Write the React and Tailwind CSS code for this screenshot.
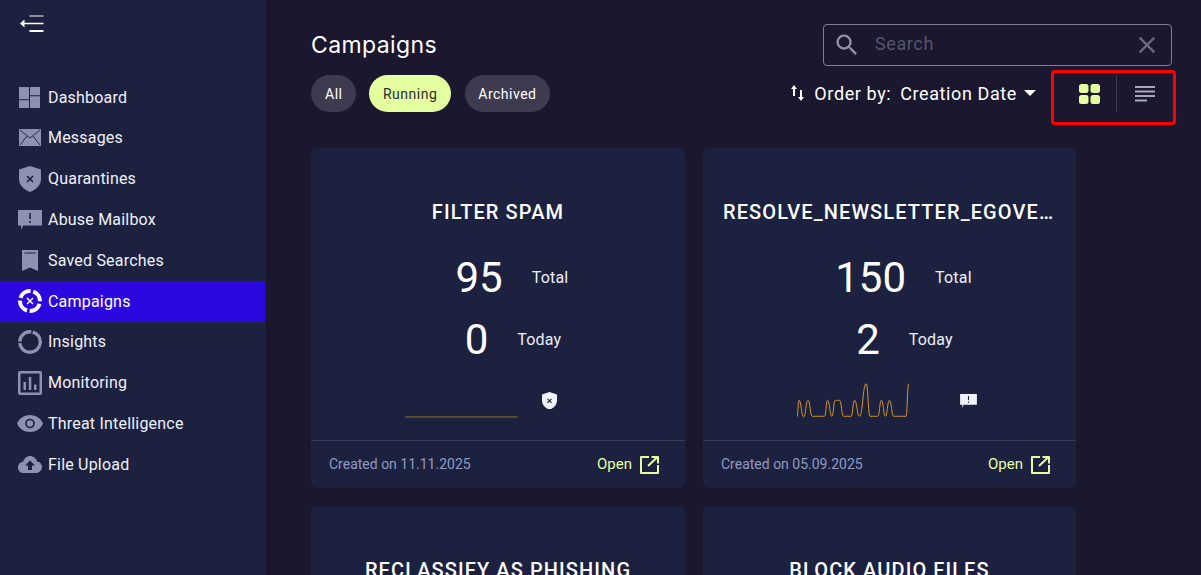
const iconClass = "fill-[#8e91b0]";

function DashboardIcon() {
  return (
    <svg width="21" height="21" viewBox="0 0 21 21" className={`${iconClass} -translate-x-px`}>
      <path d="M0 0h10v12.300H0zM0 13.300h10V21H0zM11 0h10v8.300H11zM11 9.300h10V21H11z" />
    </svg>
  );
}

function MailIcon() {
  return (
    <svg width="22" height="17" viewBox="0 0 22 17" className={iconClass}>
      <path d="M0 0h22v17H0z" />
      <path d="M1 1l10 8 10-8M1 16l7-9M21 16l-7-9" fill="none" stroke="#1d2140" strokeWidth="0.9" />
    </svg>
  );
}

function ShieldIcon({ size = 22, fill = "#8e91b0", mark = "#1d2140" }) {
  return (
    <svg width={size} height={size * 1.18} viewBox="0 0 22 26">
      <path d="M11 0l11 3.500V13c0 6-4.500 10.500-11 13C4.500 23.500 0 19 0 13V3.500z" fill={fill} />
      <path d="M8 10l6 6M14 10l-6 6" stroke={mark} strokeWidth="1.600" />
    </svg>
  );
}

function ChatIcon({ width = 24, height = 20, fill = "#8e91b0", mark = "#1d2140" }) {
  return (
    <svg width={width} height={height} viewBox="0 0 24 20">
      <path d="M0 0h24v15.500H5L3.500 20 3 15.500H0z" fill={fill} />
      <path d="M12 3v6M12 11v2" stroke={mark} strokeWidth="1.600" />
    </svg>
  );
}

function BookmarkIcon() {
  return (
    <svg width="16" height="21" viewBox="0 0 16 21" className={iconClass}>
      <path d="M0 0h16v21l-8-3.500L0 21z" />
      <path d="M2.500 3h11" stroke="#1d2140" strokeWidth="1" />
    </svg>
  );
}

function CampaignIcon() {
  return (
    <svg width="24" height="24" viewBox="0 0 24 24" fill="none" stroke="#fff">
      <circle cx="12" cy="12" r="10" strokeWidth="4" strokeDasharray="13 2.700" strokeDashoffset="-3" />
      <path d="M9 9l6 6M15 9l-6 6" strokeWidth="1.500" />
    </svg>
  );
}

function RingIcon() {
  return (
    <svg width="24" height="24" viewBox="0 0 24 24" fill="none" stroke="#8e91b0">
      <circle cx="12" cy="12" r="10.300" strokeWidth="3.400" strokeDasharray="30 1.500 17 1.500 14.700 0" strokeDashoffset="-1" />
    </svg>
  );
}

function MonitorIcon() {
  return (
    <svg width="24" height="24" viewBox="0 0 24 24" className={iconClass}>
      <path d="M2 0h20a2 2 0 012 2v20a2 2 0 01-2 2H2a2 2 0 01-2-2V2a2 2 0 012-2zm.5 2.500v19h19v-19z" fillRule="evenodd" />
      <path d="M5.500 11h2.500v8H5.500zM10.800 6h2.500v13h-2.500zM16 13.500h2.500V19H16z" />
    </svg>
  );
}

function EyeIcon() {
  return (
    <svg width="26" height="17" viewBox="0 0 26 17">
      <path d="M13 0c6 0 10.800 3.500 13 8.500C23.800 13.500 19 17 13 17S2.200 13.500 0 8.500C2.200 3.500 7 0 13 0z" fill="#8e91b0" />
      <circle cx="13" cy="8.500" r="4" fill="none" stroke="#1d2140" strokeWidth="1.700" />
    </svg>
  );
}

function CloudIcon() {
  return (
    <svg width="24" height="17" viewBox="0 0 24 17">
      <path d="M12 0c3.500 0 6.300 2.400 7 5.600 2.800.3 5 2.500 5 5.400 0 3.300-2.700 6-6 6H5.500C2.500 17 0 14.500 0 11.400c0-2.900 2.200-5.300 5-5.600C6.200 2.400 8.800 0 12 0z" fill="#8e91b0" />
      <path d="M12 4.500L17 9.500H14V14H10V9.500H7z" fill="#1d2140" />
    </svg>
  );
}

const navItems = [
  { label: "Dashboard", icon: <DashboardIcon /> },
  { label: "Messages", icon: <MailIcon /> },
  { label: "Quarantines", icon: <ShieldIcon /> },
  { label: "Abuse Mailbox", icon: <ChatIcon /> },
  { label: "Saved Searches", icon: <BookmarkIcon /> },
  { label: "Campaigns", icon: <CampaignIcon />, active: true },
  { label: "Insights", icon: <RingIcon /> },
  { label: "Monitoring", icon: <MonitorIcon /> },
  { label: "Threat Intelligence", icon: <EyeIcon /> },
  { label: "File Upload", icon: <CloudIcon /> },
];

const peaks = [
  [292, 170], [298, 120], [312, 170], [325, 120], [338, 168], [375, 168], [384, 120], [397, 168],
  [407, 120], [420, 120], [432, 168], [455, 168], [465, 120], [480, 168], [500, 70], [512, 168],
  [535, 168], [546, 120], [558, 168], [570, 120], [583, 168], [620, 168], [628, 70],
];

function smoothPath(points) {
  let d = `M${points[0][0]} ${points[0][1]}`;
  for (let i = 1; i < points.length; i++) {
    const [x0, y0] = points[i - 1];
    const [x1, y1] = points[i];
    const mid = (x1 - x0) / 2;
    d += `C${x0 + mid} ${y0} ${x1 - mid} ${y1} ${x1} ${y1}`;
  }
  return d;
}

function Sparkline({ flat }) {
  const line = flat ? "M285 170H624" : smoothPath(peaks);
  return (
    <svg width="113" height="36" viewBox={flat ? "285 65 340 108" : "292 65 340 108"} fill="none" className="shrink-0">
      {!flat && <path d={`${line}V170H292Z`} fill="#1a2236" />}
      <path d={line} stroke={flat ? "#94702f" : "#d8932f"} strokeWidth="3" />
    </svg>
  );
}

function OpenIcon() {
  return (
    <svg width="19" height="18" viewBox="0 0 19 18" fill="none" stroke="#e4ffa0" strokeWidth="2" strokeLinejoin="round">
      <path d="M9 1H1v16h17V9M8 10L17.500 1M11.500 1h6.500v6.500" />
    </svg>
  );
}

const cards = [
  { title: "FILTER SPAM", total: 95, today: 0, date: "11.11.2025", flat: true, iconPos: "mt-[10px] ml-[24px]", kind: "shield" },
  { title: "RESOLVE_NEWSLETTER_EGOVERNMENT", total: 150, today: 2, date: "05.09.2025", iconPos: "mt-[12px] ml-[50px]", kind: "chat" },
  { title: "RECLASSIFY AS PHISHING", total: 12, today: 0, date: "01.01.2025", iconPos: "mt-[10px] ml-[24px]", kind: "shield" },
  { title: "BLOCK AUDIO FILES", total: 40, today: 0, date: "01.01.2025", iconPos: "mt-[10px] ml-[24px]", kind: "shield" },
];

function CampaignCard({ card }) {
  return (
    <div className="flex h-[340px] flex-col rounded-md bg-[#1d2140]">
      <div className="flex-1 pt-[52px]">
        <h2 className="truncate px-[20px] text-center text-[20px] leading-6 font-medium tracking-[1.1px] text-white">
          {card.title}
        </h2>
        <div className="mt-[23px]">
          <div className="flex h-[62px] items-center justify-center gap-[29px] pl-[28px]">
            <span className="text-[42px] leading-none text-white">{card.total}</span>
            <span className="text-[16px] tracking-[0.2px] text-[#eceef6]">Total</span>
          </div>
          <div className="flex h-[62px] items-center justify-center gap-[29px] pl-[30px]">
            <span className="text-[42px] leading-none text-white">{card.today}</span>
            <span className="text-[16px] tracking-[0.2px] text-[#eceef6]">Today</span>
          </div>
        </div>
        <div className="mt-[10.500px] flex items-start pl-[94px]">
          <Sparkline flat={card.flat} />
          <span className={card.iconPos}>
            {card.kind === "shield" ? (
              <ShieldIcon size={15} fill="#f1f3fb" />
            ) : (
              <ChatIcon width={17} height={14} fill="#f1f3fb" />
            )}
          </span>
        </div>
      </div>
      <div className="flex h-[48px] items-center justify-between border-t border-[#3a3c5a] pr-[26px] pl-[18px] text-[14px]">
        <span className="text-[#8d9bc2]">Created on {card.date}</span>
        <span className="flex items-center gap-[8px] text-[15px] text-[#e4ffa0]">
          Open <OpenIcon />
        </span>
      </div>
    </div>
  );
}

export default function App() {
  return (
    <div className="flex h-screen overflow-hidden bg-[#1a172e] font-['Roboto',sans-serif]">
      <aside className="w-[266px] shrink-0 bg-[#1d2140]">
        <div className="h-[76.8px] pt-[15px] pl-[20px]">
          <svg width="24" height="18" viewBox="0 0 24 18" fill="none" stroke="#fff">
            <path d="M9.500 1H23.500" strokeWidth="1" />
            <path d="M4 8.500H23.500" strokeWidth="1.500" />
            <path d="M9.500 16H23.500" strokeWidth="2" />
            <path d="M0 8.500L4.500 4.500V12.500z" fill="#fff" stroke="none" />
          </svg>
        </div>
        {navItems.map((item) => (
          <div
            key={item.label}
            className={`flex h-[40.8px] w-[265px] items-center text-[16px] tracking-[0.2px] ${
              item.active ? "bg-[#2b08e0] text-white" : "text-[#eef0f8]"
            }`}
          >
            <span className="ml-[15px] flex w-[30px] justify-center">{item.icon}</span>
            <span className="ml-[3px] pt-px">{item.label}</span>
          </div>
        ))}
      </aside>

      <main className="min-w-0 flex-1 pt-[24px] pr-[29px] pl-[45px]">
        <div className="flex h-[41.5px] items-center justify-between">
          <h1 className="font-['Inter',sans-serif] text-[23px] tracking-[0.4px] text-white">Campaigns</h1>
          <div className="flex h-[41.5px] w-[349px] items-center rounded border border-[#7d7d9a] pr-[10px] pl-[9px]">
            <svg width="28" height="28" viewBox="0 0 24 24" className="fill-[#8e91a8]">
              <path d="M15.500 14h-.79l-.28-.27C15.410 12.590 16 11.110 16 9.500 16 5.910 13.090 3 9.500 3S3 5.910 3 9.500 5.910 16 9.500 16c1.610 0 3.090-.59 4.230-1.570l.27.28v.79l5 4.990L20.490 19l-4.990-5zm-6 0C7.010 14 5 11.990 5 9.500S7.010 5 9.500 5 14 7.010 14 9.500 11.990 14 9.500 14z" />
            </svg>
            <span className="ml-[14px] flex-1 pb-[2px] text-[18px] tracking-[0.6px] text-[#55556f]">Search</span>
            <svg width="28" height="28" viewBox="0 0 24 24" className="fill-[#6a6a82]">
              <path d="M19 6.410L17.590 5 12 10.590 6.410 5 5 6.410 10.590 12 5 17.590 6.410 19 12 13.410 17.590 19 19 17.590 13.410 12z" />
            </svg>
          </div>
        </div>

        <div className="mt-[4.500px] flex h-[55px] items-start justify-between">
          <div className="mt-[5px] flex gap-[13px] text-[14px] tracking-[0.5px]">
            <span className="flex h-[37px] items-center rounded-full bg-[#3e3b50] px-[14px] pt-px text-white">All</span>
            <span className="flex h-[37px] items-center rounded-full bg-[#e4ffa0] px-[13.500px] pt-px text-[#2b2a33]">
              Running
            </span>
            <span className="ml-px flex h-[37px] items-center rounded-full bg-[#3e3b50] px-[13.500px] pt-px text-white">
              Archived
            </span>
          </div>
          <div className="-mr-[4px] flex items-start">
            <div className="flex h-[46px] items-center text-[18px] tracking-[0.6px] text-white">
              <svg width="13" height="16" viewBox="0 0 13 16" fill="#fff" className="mr-[10px]">
                <path d="M3 0L6 4H4V11H2V4H0zM10 16L7 12H9V5H11V12H13z" />
              </svg>
              <span>Order by:</span>
              <span className="ml-[9px]">Creation Date</span>
              <span className="mr-[15px] ml-[7px] h-0 w-0 border-x-[6px] border-t-[6px] border-x-transparent border-t-white" />
            </div>
            <div className="flex h-[55px] w-[125px] items-start rounded-[4px] border-[3px] border-[#ff0000] pt-[2px]">
              <div className="flex h-[37px] w-[62px] items-center justify-center pl-[9px]">
                <svg width="21" height="20" viewBox="0 0 21 20" fill="#e4ffa0">
                  <rect width="9.500" height="9" rx="2.500" />
                  <rect x="11.500" width="9.500" height="9" rx="2.500" />
                  <rect y="11" width="9.500" height="9" rx="2.500" />
                  <rect x="11.500" y="11" width="9.500" height="9" rx="2.500" />
                </svg>
              </div>
              <div className="h-[37px] w-px bg-[#3a3a4e]" />
              <div className="flex h-[37px] flex-1 items-center justify-center">
                <svg width="20" height="16" viewBox="0 0 20 16" fill="#a8a9bc">
                  <rect width="20" height="2" />
                  <rect y="4.500" width="20" height="2" />
                  <rect y="9" width="20" height="2" />
                  <rect y="13.500" width="12" height="2" />
                </svg>
              </div>
            </div>
          </div>
        </div>

        <div className="mt-[23px] grid w-[765px] grid-cols-[374px_373px] gap-[18px]">
          {cards.map((card) => (
            <CampaignCard key={card.title} card={card} />
          ))}
        </div>
      </main>
    </div>
  );
}
